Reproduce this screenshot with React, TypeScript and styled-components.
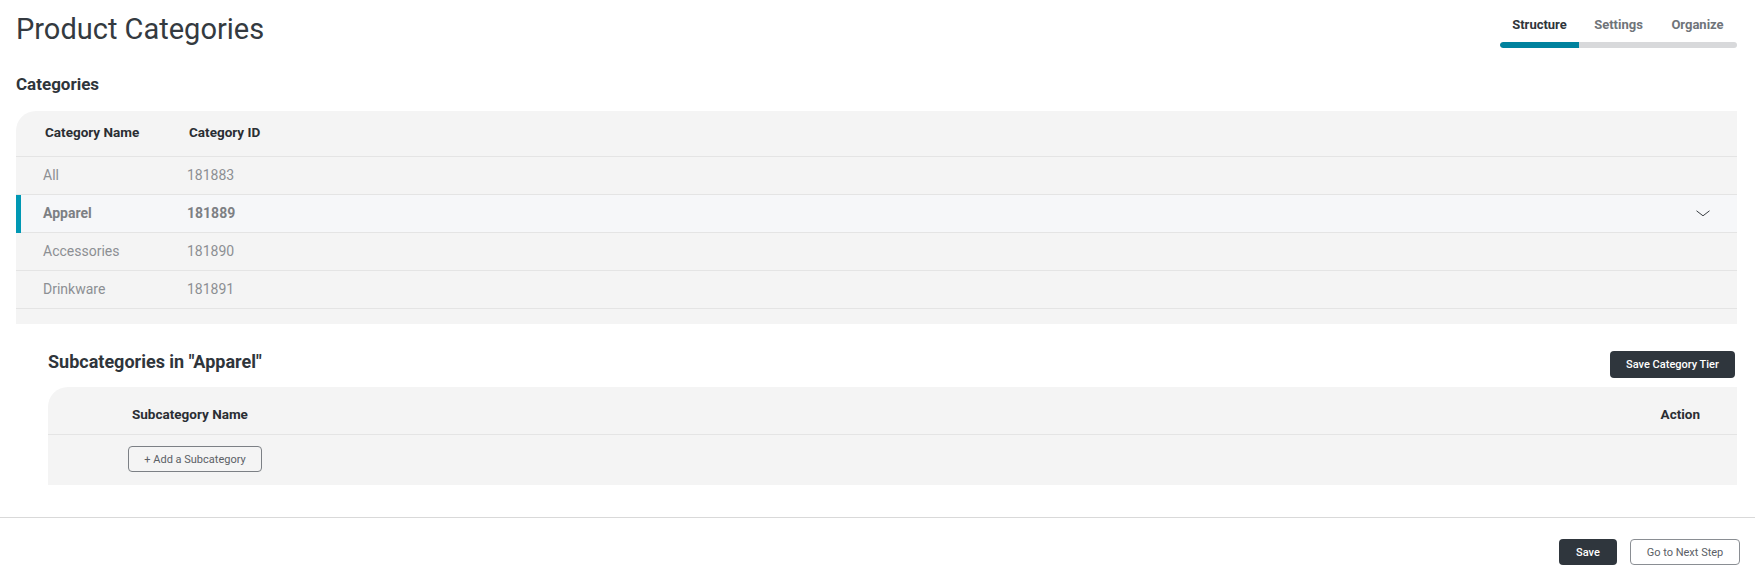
import styled, { createGlobalStyle } from 'styled-components';

const GlobalStyle = createGlobalStyle`
  html, body {
    margin: 0;
    padding: 0;
    background: #ffffff;
    font-family: Roboto, "Liberation Sans", Arial, sans-serif;
    color: #333a40;
  }
  * {
    box-sizing: border-box;
  }
`;

const Main = styled.div`
  padding: 0 18px 0 16px;
`;

const TopBar = styled.div`
  display: flex;
  justify-content: space-between;
  align-items: flex-start;
  height: 48px;
`;

const Title = styled.h1`
  margin: 11px 0 0;
  font-size: 29px;
  line-height: 36px;
  font-weight: 400;
  color: #343a40;
`;

const Steps = styled.div`
  width: 237px;
  padding-top: 17px;
`;

const StepLabels = styled.div`
  display: grid;
  grid-template-columns: repeat(3, 1fr);
`;

const StepLabel = styled.div<{ $active?: boolean }>`
  text-align: center;
  font-size: 13px;
  line-height: 16px;
  font-weight: 700;
  color: ${(p) => (p.$active ? '#2f353b' : '#6f7479')};
`;

const Track = styled.div`
  margin-top: 9px;
  height: 6px;
  border-radius: 3px;
  background: #d8d9db;
  overflow: hidden;
`;

const TrackFill = styled.div`
  height: 100%;
  background: #00829e;
  border-radius: 3px 0 0 3px;
`;

const SectionTitle = styled.h2`
  margin: 26px 0 17px;
  font-size: 17px;
  line-height: 20px;
  font-weight: 700;
  color: #2f353b;
`;

const Table = styled.div`
  background: #f4f4f4;
  border-top-left-radius: 20px;
  padding-bottom: 15px;
`;

const HeadRow = styled.div<{ $height: number; $shift: number }>`
  display: flex;
  align-items: center;
  height: ${(p) => p.$height}px;
  padding-top: ${(p) => Math.max(p.$shift, 0) * 2}px;
  padding-bottom: ${(p) => Math.max(-p.$shift, 0) * 2}px;
  border-bottom: 1px solid #e4e4e4;
  font-size: 13.5px;
  font-weight: 700;
  color: #2a2e33;
`;

const Row = styled.div<{ $selected?: boolean }>`
  position: relative;
  display: flex;
  align-items: center;
  height: 38px;
  padding-bottom: 1px;
  border-bottom: 1px solid #e4e4e4;
  background: ${(p) => (p.$selected ? '#f6f7f9' : 'transparent')};
  font-size: 14px;
  font-weight: ${(p) => (p.$selected ? 700 : 400)};
  color: ${(p) => (p.$selected ? '#7d8084' : '#8c8f93')};
  &::before {
    content: '';
    display: ${(p) => (p.$selected ? 'block' : 'none')};
    position: absolute;
    left: 0;
    top: 0;
    bottom: -1px;
    width: 5px;
    background: #0098b4;
  }
`;

const Cell = styled.div<{ $width?: number; $pad?: number }>`
  width: ${(p) => (p.$width ? `${p.$width}px` : 'auto')};
  padding-left: ${(p) => p.$pad ?? 0}px;
  flex: ${(p) => (p.$width ? 'none' : '1')};
`;

const Chevron = styled.svg`
  margin-right: 27px;
  width: 14px;
  height: 7px;
`;

const SubSection = styled.div`
  margin: 27px 0 0 32px;
`;

const SubHeader = styled.div`
  display: flex;
  justify-content: space-between;
  align-items: flex-start;
  margin-bottom: 9px;
`;

const SubTitle = styled.h3`
  margin: 0;
  font-size: 18px;
  line-height: 22px;
  font-weight: 700;
  color: #2f353b;
`;

const DarkButton = styled.button`
  height: 27px;
  padding: 0;
  border: none;
  border-radius: 4px;
  background: #2f363d;
  color: #ffffff;
  font-family: inherit;
  font-size: 11px;
  font-weight: 500;
  cursor: pointer;
`;

const TierButton = styled(DarkButton)`
  width: 125px;
  margin-right: 2px;
`;

const OutlineButton = styled.button`
  height: 26px;
  padding: 0;
  border: 1px solid #7c8085;
  border-radius: 4px;
  background: transparent;
  color: #5b6066;
  font-family: inherit;
  font-size: 11px;
  font-weight: 400;
  cursor: pointer;
`;

const AddButton = styled(OutlineButton)`
  width: 134px;
`;

const SubTable = styled.div`
  background: #f4f4f4;
  border-top-left-radius: 20px;
`;

const SubBody = styled.div`
  padding: 11px 0 13px 80px;
`;

const ActionCell = styled.div`
  margin-left: auto;
  padding-right: 37px;
`;

const Footer = styled.div`
  margin-top: 32px;
  border-top: 1px solid #d9d9d9;
  display: flex;
  justify-content: flex-end;
  gap: 13px;
  padding: 21px 15px 0;
`;

const SaveButton = styled(DarkButton)`
  height: 26px;
  width: 58px;
`;

const NextButton = styled(OutlineButton)`
  width: 110px;
  border-color: #8a8e93;
`;

const categories = [
  { name: 'All', id: '181883' },
  { name: 'Apparel', id: '181889' },
  { name: 'Accessories', id: '181890' },
  { name: 'Drinkware', id: '181891' },
];

const App = () => {
  const selected = 'Apparel';
  const step = 0;
  const steps = ['Structure', 'Settings', 'Organize'];

  return (
    <>
      <GlobalStyle />
      <Main>
        <TopBar>
          <Title>Product Categories</Title>
          <Steps>
            <StepLabels>
              {steps.map((s, idx) => (
                <StepLabel key={s} $active={idx === step}>
                  {s}
                </StepLabel>
              ))}
            </StepLabels>
            <Track>
              <TrackFill style={{ width: `${((step + 1) / steps.length) * 100}%` }} />
            </Track>
          </Steps>
        </TopBar>

        <SectionTitle>Categories</SectionTitle>
        <Table>
          <HeadRow $height={46} $shift={-2}>
            <Cell $width={173} $pad={29}>Category Name</Cell>
            <Cell>Category ID</Cell>
          </HeadRow>
          {categories.map((c) => (
            <Row key={c.id} $selected={c.name === selected}>
              <Cell $width={171} $pad={27}>{c.name}</Cell>
              <Cell>{c.id}</Cell>
              {c.name === selected && (
                <Chevron viewBox="0 0 14 7">
                  <polyline points="0.5,0.8 7,5.8 13.5,0.8" fill="none" stroke="#3a3f44" strokeWidth="1" />
                </Chevron>
              )}
            </Row>
          ))}
        </Table>

        <SubSection>
          <SubHeader>
            <SubTitle>Subcategories in "{selected}"</SubTitle>
            <TierButton>Save Category Tier</TierButton>
          </SubHeader>
          <SubTable>
            <HeadRow $height={48} $shift={3}>
              <Cell $pad={84}>Subcategory Name</Cell>
              <ActionCell>Action</ActionCell>
            </HeadRow>
            <SubBody>
              <AddButton>+ Add a Subcategory</AddButton>
            </SubBody>
          </SubTable>
        </SubSection>
      </Main>
      <Footer>
        <SaveButton>Save</SaveButton>
        <NextButton>Go to Next Step</NextButton>
      </Footer>
    </>
  );
};

export default App;
